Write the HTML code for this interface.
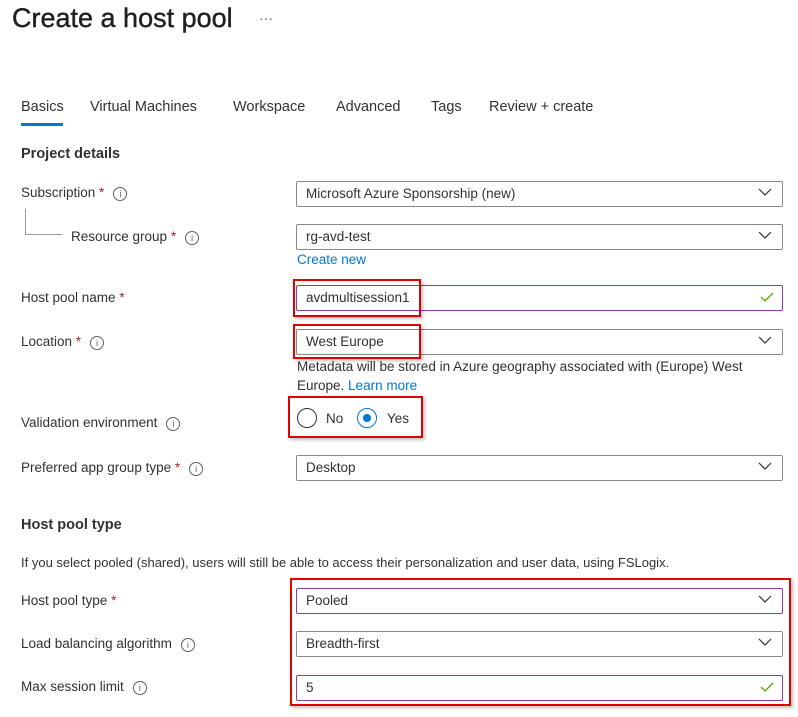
<!DOCTYPE html>
<html><head><style>
body{margin:0;width:798px;height:717px;background:#fff;font-family:"Liberation Sans",sans-serif;color:#323130;position:relative;overflow:hidden;font-size:13.5px}
.a{position:absolute;white-space:nowrap}
.f{position:absolute;left:296px;width:485px;height:24px;border:1px solid #8a8886;border-radius:2px;box-sizing:content-box}
.f span{position:absolute;left:9px;top:4px}
.f.p{border-color:#8a3aa8}
.chev{position:absolute;right:10px;top:6px}
.chk{position:absolute;right:8px;top:5px}
.r{position:absolute;border:2px solid #e00000;box-shadow:2px 2px 3px rgba(0,0,0,.25)}
.st{color:#a4262c}
.i{display:inline-block;width:12px;height:12px;border:1px solid #605e5c;border-radius:50%;font-size:9px;line-height:12px;text-align:center;vertical-align:0px;margin-left:9px;color:#605e5c}
.h{font-weight:bold;font-size:14.5px}
.l{color:#0078d4}
</style></head><body>
<div class="a" style="left:12px;top:3px;font-size:27px;color:#201f1e;-webkit-text-stroke:0.4px #201f1e">Create a host pool</div>
<div class="a" style="left:259px;top:10px;font-size:14px;color:#605e5c">···</div>
<div class="a" style="left:21px;top:99px;font-size:14.5px">Basics</div>
<div class="a" style="left:21px;top:123px;width:42px;height:3px;background:#0078d4"></div>
<div class="a" style="left:90px;top:99px;font-size:14.5px">Virtual Machines</div>
<div class="a" style="left:233px;top:99px;font-size:14.5px">Workspace</div>
<div class="a" style="left:336px;top:99px;font-size:14.5px">Advanced</div>
<div class="a" style="left:431px;top:99px;font-size:14.5px">Tags</div>
<div class="a" style="left:489px;top:99px;font-size:14.5px">Review + create</div>
<div class="a h" style="left:21px;top:146px">Project details</div>

<div class="a" style="left:21px;top:185px">Subscription <span class="st">*</span><span class="i">i</span></div>
<div class="a" style="left:25px;top:209px;width:36px;height:25px;border-left:1px solid #999;border-bottom:1px solid #999"></div>
<div class="a" style="left:71px;top:229px">Resource group <span class="st">*</span><span class="i">i</span></div>
<div class="a" style="left:21px;top:290px">Host pool name <span class="st">*</span></div>
<div class="a" style="left:21px;top:334px">Location <span class="st">*</span><span class="i">i</span></div>
<div class="a" style="left:21px;top:415px">Validation environment<span class="i">i</span></div>
<div class="a" style="left:21px;top:460px">Preferred app group type <span class="st">*</span><span class="i">i</span></div>
<div class="a h" style="left:21px;top:517px">Host pool type</div>
<div class="a" style="left:21px;top:555px;font-size:13px">If you select pooled (shared), users will still be able to access their personalization and user data, using FSLogix.</div>
<div class="a" style="left:21px;top:593px">Host pool type <span class="st">*</span></div>
<div class="a" style="left:21px;top:636px">Load balancing algorithm<span class="i">i</span></div>
<div class="a" style="left:21px;top:679px">Max session limit<span class="i">i</span></div>

<svg width="0" height="0" style="position:absolute"><defs><symbol id="c" viewBox="0 0 14 8"><path d="M1 1l6 6 6-6" fill="none" stroke="#323130" stroke-width="1.2"/></symbol><symbol id="k" viewBox="0 0 14 12"><path d="M1 6l4 4 8-8" fill="none" stroke="#57a300" stroke-width="1.3"/></symbol></defs></svg>

<div class="f" style="top:181px"><span>Microsoft Azure Sponsorship (new)</span><svg class="chev" width="14" height="8"><use href="#c"/></svg></div>
<div class="f" style="top:224px"><span>rg-avd-test</span><svg class="chev" width="14" height="8"><use href="#c"/></svg></div>
<div class="a l" style="left:297px;top:252px">Create new</div>
<div class="f p" style="top:285px"><span>avdmultisession1</span><svg class="chk" width="14" height="12"><use href="#k"/></svg></div>
<div class="f" style="top:329px"><span>West Europe</span><svg class="chev" width="14" height="8"><use href="#c"/></svg></div>
<div class="a" style="left:297px;top:357px;line-height:19px">Metadata will be stored in Azure geography associated with (Europe) West<br>Europe. <span class="l">Learn more</span></div>
<div class="a" style="left:297px;top:408px;width:18px;height:18px;border:1px solid #323130;border-radius:50%"></div>
<div class="a" style="left:326px;top:411px">No</div>
<div class="a" style="left:357px;top:408px;width:18px;height:18px;border:1px solid #0078d4;border-radius:50%"></div>
<div class="a" style="left:363px;top:414px;width:8px;height:8px;background:#0078d4;border-radius:50%"></div>
<div class="a" style="left:387px;top:411px">Yes</div>
<div class="f" style="top:455px"><span>Desktop</span><svg class="chev" width="14" height="8"><use href="#c"/></svg></div>
<div class="f p" style="top:588px"><span>Pooled</span><svg class="chev" width="14" height="8"><use href="#c"/></svg></div>
<div class="f" style="top:631px"><span>Breadth-first</span><svg class="chev" width="14" height="8"><use href="#c"/></svg></div>
<div class="f p" style="top:675px"><span>5</span><svg class="chk" width="14" height="12"><use href="#k"/></svg></div>

<div class="r" style="left:293px;top:279px;width:124px;height:34px"></div>
<div class="r" style="left:293px;top:324px;width:124px;height:31px"></div>
<div class="r" style="left:288px;top:396px;width:131px;height:38px"></div>
<div class="r" style="left:290px;top:578px;width:497px;height:124px"></div>
</body></html>
